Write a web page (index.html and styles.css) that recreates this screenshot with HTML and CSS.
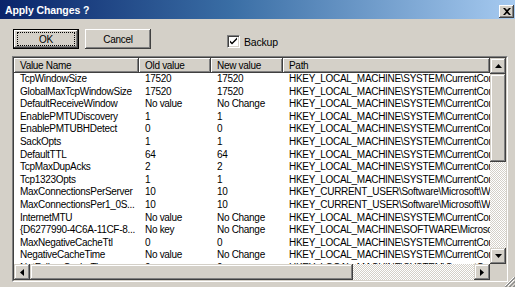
FILE: index.html
```html
<!DOCTYPE html>
<html>
<head>
<meta charset="utf-8">
<link rel="stylesheet" href="styles.css">
</head>
<body>
<div class="window">
  <div class="titlebar">
    <span class="title">Apply Changes ?</span>
    <div class="close"><svg width="8" height="7" viewBox="0 0 8 7"><path d="M0 0h2l2 2 2-2h2L5 3.5 8 7H6L4 5 2 7H0l3-3.5z" fill="#000"/></svg></div>
  </div>
  <div class="toolbar">
    <div class="btn default"><span class="focus">OK</span></div>
    <div class="btn">Cancel</div>
    <div class="check"><span class="box"><svg width="9" height="9" viewBox="0 0 9 9"><path d="M1 3.5l2 2 5-5v2l-5 5-2-2z" fill="#000"/></svg></span><span>Backup</span></div>
  </div>
  <div class="listview">
    <div class="lv-inner">
      <div class="viewport">
        <div class="row header"><div class="hc">Value Name</div><div class="hc">Old value</div><div class="hc">New value</div><div class="hc">Path</div></div>
        <div class="row"><div>TcpWindowSize</div><div>17520</div><div>17520</div><div>HKEY_LOCAL_MACHINE\SYSTEM\CurrentControlSet</div></div>
        <div class="row"><div>GlobalMaxTcpWindowSize</div><div>17520</div><div>17520</div><div>HKEY_LOCAL_MACHINE\SYSTEM\CurrentControlSet</div></div>
        <div class="row"><div>DefaultReceiveWindow</div><div>No value</div><div>No Change</div><div>HKEY_LOCAL_MACHINE\SYSTEM\CurrentControlSet</div></div>
        <div class="row"><div>EnablePMTUDiscovery</div><div>1</div><div>1</div><div>HKEY_LOCAL_MACHINE\SYSTEM\CurrentControlSet</div></div>
        <div class="row"><div>EnablePMTUBHDetect</div><div>0</div><div>0</div><div>HKEY_LOCAL_MACHINE\SYSTEM\CurrentControlSet</div></div>
        <div class="row"><div>SackOpts</div><div>1</div><div>1</div><div>HKEY_LOCAL_MACHINE\SYSTEM\CurrentControlSet</div></div>
        <div class="row"><div>DefaultTTL</div><div>64</div><div>64</div><div>HKEY_LOCAL_MACHINE\SYSTEM\CurrentControlSet</div></div>
        <div class="row"><div>TcpMaxDupAcks</div><div>2</div><div>2</div><div>HKEY_LOCAL_MACHINE\SYSTEM\CurrentControlSet</div></div>
        <div class="row"><div>Tcp1323Opts</div><div>1</div><div>1</div><div>HKEY_LOCAL_MACHINE\SYSTEM\CurrentControlSet</div></div>
        <div class="row"><div>MaxConnectionsPerServer</div><div>10</div><div>10</div><div>HKEY_CURRENT_USER\Software\Microsoft\Windows</div></div>
        <div class="row"><div>MaxConnectionsPer1_0S...</div><div>10</div><div>10</div><div>HKEY_CURRENT_USER\Software\Microsoft\Windows</div></div>
        <div class="row"><div>InternetMTU</div><div>No value</div><div>No Change</div><div>HKEY_LOCAL_MACHINE\SYSTEM\CurrentControlSet</div></div>
        <div class="row"><div>{D6277990-4C6A-11CF-8...</div><div>No key</div><div>No Change</div><div>HKEY_LOCAL_MACHINE\SOFTWARE\Microsoft</div></div>
        <div class="row"><div>MaxNegativeCacheTtl</div><div>0</div><div>0</div><div>HKEY_LOCAL_MACHINE\SYSTEM\CurrentControlSet</div></div>
        <div class="row"><div>NegativeCacheTime</div><div>No value</div><div>No Change</div><div>HKEY_LOCAL_MACHINE\SYSTEM\CurrentControlSet</div></div>
        <div class="row"><div>NetFailureCacheTime</div><div>0</div><div>0</div><div>HKEY_LOCAL_MACHINE\SYSTEM\CurrentControlSet</div></div>
      </div>
      <div class="vscroll">
        <div class="sbtn"><svg width="7" height="4" viewBox="0 0 7 4"><path d="M3.5 0L7 4H0z" fill="#000"/></svg></div>
        <div class="thumb v"></div>
        <div class="track"></div>
        <div class="sbtn"><svg width="7" height="4" viewBox="0 0 7 4"><path d="M0 0h7L3.5 4z" fill="#000"/></svg></div>
      </div>
      <div class="hscroll">
        <div class="sbtn"><svg width="4" height="7" viewBox="0 0 4 7"><path d="M4 0v7L0 3.5z" fill="#000"/></svg></div>
        <div class="thumb h"></div>
        <div class="track"></div>
        <div class="sbtn"><svg width="4" height="7" viewBox="0 0 4 7"><path d="M0 0l4 3.5L0 7z" fill="#000"/></svg></div>
      </div>
      <div class="corner"></div>
    </div>
  </div>
  <svg class="grip" width="11" height="11" viewBox="0 0 11 11">
    <path d="M10 1L1 10M10 4L4 10M10 7L7 10" stroke="#fff" stroke-width="1"/>
    <path d="M11 1L1 11M11 2L2 11M11 5L5 11M11 6L6 11M11 9L9 11M11 10L10 11" stroke="#808080" stroke-width="0.8"/>
  </svg>
</div>
</body>
</html>
```
FILE: styles.css
```css
* { box-sizing: border-box; }
html, body { margin: 0; padding: 0; }
body {
  width: 515px;
  height: 287px;
  overflow: hidden;
  background: #d4d0c8;
  font-family: "Liberation Sans", Arial, sans-serif;
  font-size: 10px;
  color: #000;
}
.window {
  position: relative;
  width: 515px;
  height: 287px;
  display: flex;
  flex-direction: column;
  background: #d4d0c8;
}
.titlebar {
  height: 19px;
  flex: none;
  display: flex;
  align-items: center;
  padding: 0 1px 0 5px;
  background: linear-gradient(to right, #0a246a, #3a6ea5 45%, #a6caf0);
}
.title {
  flex: 1;
  color: #fff;
  font-weight: bold;
  font-size: 10.5px;
  letter-spacing: -0.1px;
  padding-top: 1px;
}
.close {
  width: 15px;
  height: 13px;
  margin-top: 3px;
  background: #d4d0c8;
  display: flex;
  align-items: center;
  justify-content: center;
  box-shadow: inset -1px -1px #404040, inset 1px 1px #fff, inset -2px -2px #808080;
}
.toolbar {
  height: 37px;
  flex: none;
  display: flex;
  align-items: flex-start;
  padding: 10px 0 0 13px;
}
.btn {
  width: 66px;
  height: 20px;
  margin-right: 6px;
  display: flex;
  align-items: center;
  justify-content: center;
  letter-spacing: -0.3px;
  box-shadow: inset -1px -1px #404040, inset 1px 1px #fff, inset -2px -2px #808080;
}
.btn.default {
  border: 1px solid #000;
  box-shadow: inset -1px -1px #404040, inset 1px 1px #fff, inset -2px -2px #808080;
}
.focus {
  width: 58px;
  height: 14px;
  border: 1px dotted #000;
  display: flex;
  align-items: center;
  justify-content: center;
}
.check {
  margin-left: 70px;
  margin-top: 6px;
  display: flex;
  align-items: center;
  gap: 4px;
  font-size: 10.5px;
  letter-spacing: -0.2px;
}
.box {
  width: 13px;
  height: 13px;
  background: #fff;
  border: 1px solid;
  border-color: #808080 #fff #fff #808080;
  box-shadow: inset 1px 1px #404040, inset -1px -1px #d4d0c8;
  display: flex;
  align-items: center;
  justify-content: center;
}
.listview {
  margin: 0 7px 0 12px;
  height: 226px;
  border: 1px solid;
  border-color: #808080 #fff #fff #808080;
}
.lv-inner {
  height: 100%;
  border: 1px solid;
  border-color: #404040 #d4d0c8 #d4d0c8 #404040;
  display: grid;
  grid-template-columns: 1fr 16px;
  grid-template-rows: 1fr 16px;
  background: #fff;
}
.viewport {
  overflow: hidden;
  background: #fff;
}
.row {
  display: grid;
  grid-template-columns: 125px 72px 72px 1fr;
  height: 12.6px;
  line-height: 12.6px;
  white-space: nowrap;
  letter-spacing: -0.3px;
}
.row > div {
  overflow: hidden;
  padding-left: 6px;
}
.row.header {
  height: 15px;
  line-height: 15px;
  background: #d4d0c8;
}
.hc {
  box-shadow: inset -1px -1px #404040, inset 1px 1px #fff, inset -2px -2px #808080;
}
.vscroll {
  display: flex;
  flex-direction: column;
}
.hscroll {
  display: flex;
}
.sbtn {
  flex: none;
  width: 16px;
  height: 16px;
  background: #d4d0c8;
  display: flex;
  align-items: center;
  justify-content: center;
  box-shadow: inset -1px -1px #404040, inset 1px 1px #d4d0c8, inset -2px -2px #808080, inset 2px 2px #fff;
}
.thumb {
  flex: none;
  background: #d4d0c8;
  box-shadow: inset -1px -1px #404040, inset 1px 1px #d4d0c8, inset -2px -2px #808080, inset 2px 2px #fff;
}
.thumb.v { height: 88px; }
.thumb.h { width: 323px; }
.track {
  flex: 1;
  background: repeating-conic-gradient(#fff 0 25%, #d4d0c8 0 50%) 0 0 / 2px 2px;
}
.corner {
  background: #d4d0c8;
}
.grip {
  position: absolute;
  right: 0;
  bottom: 0;
}
```
